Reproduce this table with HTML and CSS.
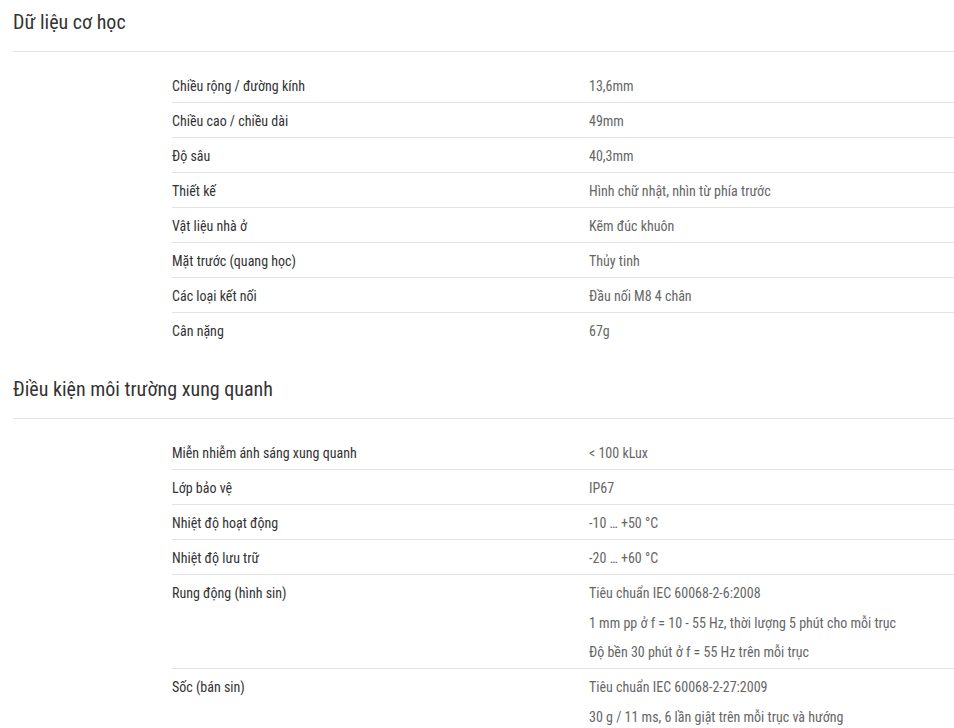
FILE: index.html
```html
<!DOCTYPE html>
<html lang="vi">
<head>
<meta charset="utf-8">
<title>Dữ liệu kỹ thuật</title>
<link rel="stylesheet" href="styles.css">
</head>
<body>
<div class="page">
  <section class="section">
    <h2 class="section-title">Dữ liệu cơ học</h2>
    <div class="spec-list">
      <div class="spec-row"><div class="spec-label">Chiều rộng / đường kính</div><div class="spec-value">13,6mm</div></div>
      <div class="spec-row"><div class="spec-label">Chiều cao / chiều dài</div><div class="spec-value">49mm</div></div>
      <div class="spec-row"><div class="spec-label">Độ sâu</div><div class="spec-value">40,3mm</div></div>
      <div class="spec-row"><div class="spec-label">Thiết kế</div><div class="spec-value">Hình chữ nhật, nhìn từ phía trước</div></div>
      <div class="spec-row"><div class="spec-label">Vật liệu nhà ở</div><div class="spec-value">Kẽm đúc khuôn</div></div>
      <div class="spec-row"><div class="spec-label">Mặt trước (quang học)</div><div class="spec-value">Thủy tinh</div></div>
      <div class="spec-row"><div class="spec-label">Các loại kết nối</div><div class="spec-value">Đầu nối M8 4 chân</div></div>
      <div class="spec-row"><div class="spec-label">Cân nặng</div><div class="spec-value">67g</div></div>
    </div>
  </section>
  <section class="section">
    <h2 class="section-title">Điều kiện môi trường xung quanh</h2>
    <div class="spec-list">
      <div class="spec-row"><div class="spec-label">Miễn nhiễm ánh sáng xung quanh</div><div class="spec-value">&lt; 100 kLux</div></div>
      <div class="spec-row"><div class="spec-label">Lớp bảo vệ</div><div class="spec-value">IP67</div></div>
      <div class="spec-row"><div class="spec-label">Nhiệt độ hoạt động</div><div class="spec-value">-10 … +50 °C</div></div>
      <div class="spec-row"><div class="spec-label">Nhiệt độ lưu trữ</div><div class="spec-value">-20 … +60 °C</div></div>
      <div class="spec-row"><div class="spec-label">Rung động (hình sin)</div><div class="spec-value">Tiêu chuẩn IEC 60068-2-6:2008<br>1 mm pp ở f = 10 - 55 Hz, thời lượng 5 phút cho mỗi trục<br>Độ bền 30 phút ở f = 55 Hz trên mỗi trục</div></div>
      <div class="spec-row"><div class="spec-label">Sốc (bán sin)</div><div class="spec-value">Tiêu chuẩn IEC 60068-2-27:2009<br>30 g / 11 ms, 6 lần giật trên mỗi trục và hướng</div></div>
    </div>
  </section>
</div>
</body>
</html>
```
FILE: styles.css
```css
html, body {
  margin: 0;
  padding: 0;
  background: #ffffff;
}
body {
  font-family: "Roboto Condensed", Roboto, "Liberation Sans", sans-serif;
  font-stretch: condensed;
  color: #333333;
}
.page {
  padding-left: 13px;
}
.section {
  margin-bottom: 20px;
}
.section-title {
  margin: 0;
  padding: 10px 0 0;
  height: 41px;
  box-sizing: content-box;
  font-size: 20px;
  line-height: 24px;
  font-weight: 400;
  color: #333333;
  border-bottom: 1px solid #e3e3e3;
}
.spec-list {
  margin: 16px 0 0 159px;
}
.spec-row {
  display: flex;
  font-size: 14px;
  line-height: 29.5px;
  padding: 4px 0 0.5px;
  border-bottom: 1px solid #e3e3e3;
}
.spec-row:last-child {
  border-bottom: none;
}
.spec-label {
  width: 417px;
  flex: none;
  color: #333333;
}
.spec-value {
  flex: 1;
  color: #666666;
}
```
